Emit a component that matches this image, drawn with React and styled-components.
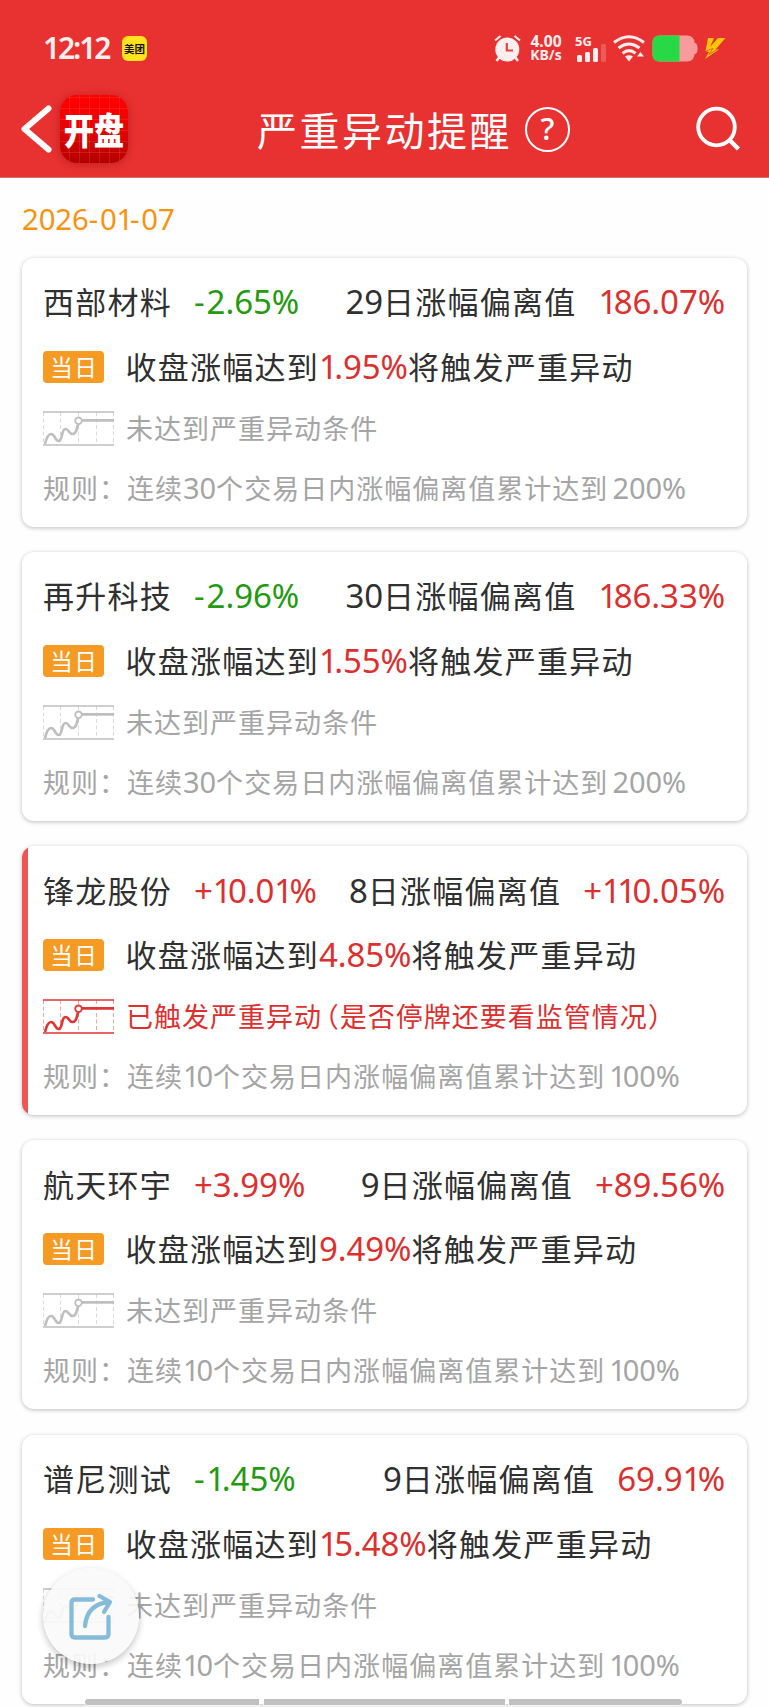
import React from "react";
import styled, { createGlobalStyle, css } from "styled-components";

const GlobalStyle = createGlobalStyle`
  * { box-sizing: border-box; }
  html, body { margin: 0; padding: 0; background: #fefefe; overflow: hidden; }
  body { font-family: "Noto Sans CJK SC", "Noto Sans", sans-serif; }
`;

const RED = "#dc302f";
const GREEN = "#239a10";
const INK = "#303030";
const GREY = "#a5a5a5";

const Screen = styled.div`
  position: relative;
  width: 769px;
  height: 1707px;
  overflow: hidden;
  background: #fefefe;
`;

const Header = styled.header`
  height: 178px;
  background: #e83131;
  border-bottom: 1px solid #d8706c;
`;

const StatusBar = styled.div`
  height: 94px;
  padding: 2px 43px 0 43px;
  display: flex;
  align-items: center;
  justify-content: space-between;
  color: #ffeeee;
`;

const StatusGroup = styled.div`
  display: flex;
  align-items: center;
`;

const Clock = styled.span`
  width: 79px;
  font: 600 30px/40px "Noto Sans", sans-serif;
  letter-spacing: -2.1px;
  white-space: nowrap;
`;

const AppChip = styled.span`
  width: 25px;
  height: 25px;
  border-radius: 6px;
  background: #ffe31f;
  color: #17140a;
  font: 700 10.5px/25px "Noto Sans CJK SC", sans-serif;
  text-align: center;
  white-space: nowrap;
`;

const Speed = styled.span`
  width: 34px;
  margin-left: 8px;
  margin-right: 1px;
  font: 700 15.6px/14px "Noto Sans", sans-serif;
  text-align: center;
  display: flex;
  flex-direction: column;
  align-items: center;
  gap: 0.5px;
  white-space: nowrap;
`;

const SpeedUnit = styled.span`
  font-size: 14px;
`;

const Signal = styled.span`
  width: 31px;
  height: 27px;
  margin-left: 11px;
  display: flex;
  flex-direction: column;
  font: 700 13px/12px "Noto Sans", sans-serif;
`;

const Bars = styled.span`
  height: 15px;
  margin: 0 0 0 2px;
  display: flex;
  align-items: flex-end;
  gap: 3.5px;
`;

const Bar = styled.i`
  width: 4.6px;
  height: ${(p) => p.$h}px;
  border-radius: 1.5px;
  background: #ffeeee;
  opacity: ${(p) => (p.$dim ? 0.22 : 1)};
`;

const TitleBar = styled.div`
  height: 70px;
  padding: 0 27px 0 20px;
  display: flex;
  align-items: center;
`;

const Logo = styled.div`
  width: 68px;
  height: 68px;
  margin-left: 6px;
  border-radius: 17px;
  background:
    repeating-linear-gradient(90deg, transparent 0 9px, rgba(255, 110, 90, 0.22) 9px 10px),
    repeating-linear-gradient(0deg, transparent 0 10px, rgba(255, 110, 90, 0.22) 10px 11px),
    linear-gradient(#ff0000 10%, #e40505 50%, #b30000);
  box-shadow: 0 1px 9px rgba(110, 0, 0, 0.35);
  display: flex;
  align-items: center;
  justify-content: center;
`;

const LogoText = styled.span`
  font: 900 37px/65px "Noto Sans CJK SC", sans-serif;
  letter-spacing: -0.5px;
  padding-right: 2px;
  color: #fff;
  white-space: nowrap;
  transform: scaleX(0.82);
`;

const Title = styled.h1`
  width: 268px;
  margin: 0 0 0 129px;
  font: 400 40px/60px "Noto Sans CJK SC", sans-serif;
  letter-spacing: 2.5px;
  color: #fff;
  white-space: nowrap;
`;

const HelpIcon = styled.span`
  width: 45px;
  height: 45px;
  border: 2.5px solid #fff;
  border-radius: 50%;
  color: #fff;
  font: 500 31px/39px "Noto Sans", sans-serif;
  text-align: center;
`;

const DateLine = styled.div`
  height: 79.6px;
  padding: 2px 22px 0;
  display: flex;
  align-items: center;
`;

const List = styled.main`
  padding: 0 22px;
  display: flex;
  flex-direction: column;
  gap: 25.3px;
`;

const Card = styled.article`
  height: 269px;
  flex: none;
  padding: 12px 22px 8px 21px;
  border-radius: 12px;
  background: #fff;
  overflow: hidden;
  box-shadow: 0 1px 4px rgba(0, 0, 0, 0.26);
  ${(p) =>
    p.$active &&
    css`
      background: linear-gradient(#ef5557, #ef5557) left top / 6px 100% no-repeat #fff;
    `}
`;

const Row = styled.div`
  height: ${(p) => p.$h}px;
  display: flex;
  align-items: center;
  white-space: nowrap;
`;

const MainText = styled.span`
  padding-bottom: 2px;
  font: 400 31px/46px "Noto Sans CJK SC", sans-serif;
  letter-spacing: 1.25px;
  color: ${INK};
`;

const SubText = styled.span`
  padding-bottom: 1px;
  font: 400 27px/40px "Noto Sans CJK SC", sans-serif;
  letter-spacing: 1.02px;
  color: ${(p) => p.$color || GREY};
`;

const Figure = styled.span`
  font-family: "Noto Sans", sans-serif;
  font-size: ${(p) => p.$size || 33}px;
  line-height: 40px;
  letter-spacing: -0.1px;
  color: ${(p) => p.$color};
`;

const One = styled.span`
  letter-spacing: -0.11em;
`;

const Dash = styled.span`
  letter-spacing: 0.06em;
`;

const Change = styled.span`
  margin-left: 22px;
  flex: 1;
`;

const Total = styled.span`
  margin-left: 22px;
`;

const Badge = styled.span`
  width: 61px;
  height: 32px;
  margin-right: 21.5px;
  border-radius: 4px;
  background: #f59a23;
  color: #fff;
  font: 400 22.5px/31px "Noto Sans CJK SC", sans-serif;
  letter-spacing: 1.5px;
  text-indent: 1.5px;
  text-align: center;
`;

const TrendSvg = styled.svg`
  width: 71px;
  height: 35px;
  margin-right: 12px;
  flex: none;
`;

const OpenParen = styled.span`
  margin-left: 3px;
  font-feature-settings: "halt" 1;
`;

const Limit = styled.span`
  margin-left: 4px;
`;

const ShareButton = styled.button`
  position: absolute;
  left: 43px;
  top: 1567.5px;
  width: 96px;
  height: 96px;
  padding: 0;
  border: 0;
  border-radius: 50%;
  background: rgba(250, 250, 250, 0.92);
  box-shadow: 0 3px 7px rgba(0, 0, 0, 0.24);
`;

const NavHandle = styled.div`
  position: absolute;
  left: 85px;
  top: 1698.5px;
  width: 597px;
  display: grid;
  grid-template-columns: 174px 241px 173px;
  gap: 4.5px;
`;

const NavPart = styled.i`
  height: 6px;
  background: #c0c0c0;
  box-shadow: 0 0 0 1px rgba(255, 255, 255, 0.6);
  border-radius: ${(p) => p.$r || "0"};
`;

function Num({ children, ...rest }) {
  return (
    <Figure {...rest}>
      {children.split("").map((c, i) => {
        if (c === "1") return <One key={i}>1</One>;
        if (c === "-") return <Dash key={i}>-</Dash>;
        return c;
      })}
    </Figure>
  );
}

function Trend({ active }) {
  const c = active ? "#df3533" : "#bfbfbf";
  const dash = active ? "#efa5a4" : "#dadada";
  return (
    <TrendSvg viewBox="0 0 71 35" fill="none">
      <path d="M.5 1V34M17.5 1V34M35.5 1V34M53.5 1V34M70.5 1V34" stroke={dash} strokeDasharray="4 2.5" />
      <path d="M0 1H71M0 34H71" stroke={c} strokeWidth="1.4" />
      <path
        d="M2 33C4 25 6 23 8 23C12 23 12 30 15.500 30C20 30 18 18 22.500 18C26 18 26 23.500 30 23C34 22.500 33.500 17 35.300 13"
        stroke={c}
        strokeWidth="2.7"
      />
      <circle cx="35.500" cy="9.800" r="3.300" stroke={c} strokeWidth="1.8" fill="#fff" />
      <path d="M39 9.400H71" stroke={c} strokeWidth="2.700" />
    </TrendSvg>
  );
}

function StockCard({ name, change, days, total, trigger, active, span, limit }) {
  return (
    <Card $active={active}>
      <Row $h={65}>
        <MainText>{name}</MainText>
        <Change>
          <Num $color={change[0] === "-" ? GREEN : RED}>{change}</Num>
        </Change>
        <MainText>
          <Num $color={INK}>{days}</Num>日涨幅偏离值
        </MainText>
        <Total>
          <Num $color={RED}>{total}</Num>
        </Total>
      </Row>
      <Row $h={64}>
        <Badge>当日</Badge>
        <MainText>
          收盘涨幅达到<Num $color={RED}>{trigger}</Num>将触发严重异动
        </MainText>
      </Row>
      <Row $h={59}>
        <Trend active={active} />
        {active ? (
          <SubText $color={RED}>
            已触发严重异动<OpenParen>（</OpenParen>是否停牌还要看监管情况）
          </SubText>
        ) : (
          <SubText>未达到严重异动条件</SubText>
        )}
      </Row>
      <Row $h={61}>
        <SubText>
          规则：连续<Num $size={29} $color={GREY}>{span}</Num>个交易日内涨幅偏离值累计达到
          <Limit>
            <Num $size={29} $color={GREY}>{limit}</Num>
          </Limit>
        </SubText>
      </Row>
    </Card>
  );
}

const stocks = [
  { name: "西部材料", change: "-2.65%", days: "29", total: "186.07%", trigger: "1.95%", span: "30", limit: "200%" },
  { name: "再升科技", change: "-2.96%", days: "30", total: "186.33%", trigger: "1.55%", span: "30", limit: "200%" },
  { name: "锋龙股份", change: "+10.01%", days: "8", total: "+110.05%", trigger: "4.85%", active: true, span: "10", limit: "100%" },
  { name: "航天环宇", change: "+3.99%", days: "9", total: "+89.56%", trigger: "9.49%", span: "10", limit: "100%" },
  { name: "谱尼测试", change: "-1.45%", days: "9", total: "69.91%", trigger: "15.48%", span: "10", limit: "100%" },
];

const AlarmIcon = () => (
  <svg width="27" height="27" viewBox="0 0 27 27" fill="none" stroke="#ffeeee">
    <circle cx="13.300" cy="14.500" r="12" fill="#ffeeee" stroke="none" />
    <path d="M1 5.500L6.500 1M20.500 1L26 5.500" strokeWidth="2.200" />
    <path d="M5.500 22L2.500 26M21 22L24 26" strokeWidth="2.600" />
    <path d="M12.800 8V15.500H19" stroke="#e04443" strokeWidth="2.200" />
  </svg>
);

const WifiStatus = styled.svg`
  margin-left: 7px;
`;

const BatteryStatus = styled.svg`
  margin-left: 7px;
`;

const BoltStatus = styled.svg`
  margin-left: 6px;
`;

const SearchSvg = styled.svg`
  margin-left: auto;
`;

export default function App() {
  return (
    <Screen>
      <GlobalStyle />
      <Header>
        <StatusBar>
          <StatusGroup>
            <Clock>12:12</Clock>
            <AppChip>美团</AppChip>
          </StatusGroup>
          <StatusGroup>
            <AlarmIcon />
            <Speed>
              4.00<SpeedUnit>KB/s</SpeedUnit>
            </Speed>
            <Signal>
              5G
              <Bars>
                <Bar $h={7} />
                <Bar $h={10} />
                <Bar $h={14} />
                <Bar $h={18} $dim />
              </Bars>
            </Signal>
            <WifiStatus width="32" height="27" viewBox="0 0 32 27" fill="none">
              <path d="M1 7.500Q16 -4 31 7.500M5.500 13Q16 5 26.500 13M9.500 18.300Q16 13 22.500 18.300" stroke="#ffeeee" strokeWidth="3" />
              <path d="M12 21.500Q16 19 20 21.500L16 26.500ZM24 21.500L27.500 17L31 21.500Z" fill="#ffeeee" />
            </WifiStatus>
            <BatteryStatus width="46" height="27" viewBox="0 0 46 27">
              <rect x="0.500" y="0.500" width="42" height="26" rx="7" fill="#f99b9c" />
              <path d="M42 8H43.500Q45.500 9 45.500 13.500T43.500 19H42Z" fill="#f99b9c" />
              <path d="M27.500 .5H7.500Q.5 .5 .5 7.500V19.500Q.5 26.500 7.500 26.500H27.500Z" fill="#28d946" />
            </BatteryStatus>
            <BoltStatus width="22" height="23" viewBox="0 0 22 23">
              <path d="M4 1H10L6 10L14 1H21.500L11.500 12.500H15L1 22L5 15L1.500 14Z" fill="#ffc50b" />
              <path d="M2 14L9 11.500L5 17.500L13 12.500" stroke="#e06a1f" fill="none" />
            </BoltStatus>
          </StatusGroup>
        </StatusBar>
        <TitleBar>
          <svg width="34" height="48" viewBox="0 0 34 48" fill="none">
            <path d="M28.500 3.500L4.500 24L28.500 44.500" stroke="#fff" strokeWidth="6" strokeLinecap="round" strokeLinejoin="round" />
          </svg>
          <Logo>
            <LogoText>开盘</LogoText>
          </Logo>
          <Title>严重异动提醒</Title>
          <HelpIcon>?</HelpIcon>
          <SearchSvg width="46" height="46" viewBox="0 0 46 46" fill="none" stroke="#fff">
            <circle cx="20.500" cy="21" r="18.300" strokeWidth="3.800" />
            <path d="M33.500 34L42.500 43" strokeWidth="4.500" />
          </SearchSvg>
        </TitleBar>
      </Header>
      <DateLine>
        <Num $size={29.3} $color="#f7930f">2026-01-07</Num>
      </DateLine>
      <List>
        {stocks.map((s) => (
          <StockCard key={s.name} {...s} />
        ))}
      </List>
      <ShareButton aria-label="share">
        <svg width="96" height="96" viewBox="0 0 96 96" fill="none" stroke="#86bcd9" strokeWidth="4.300" strokeLinecap="round" strokeLinejoin="round">
          <path d="M50 31.500H32Q28.500 31.500 28.500 35V66Q28.500 69.500 32 69.500H62Q65.500 69.500 65.500 66V49" />
          <path d="M42 58Q44 36 66 34M56.500 28L67 34L61 44" />
        </svg>
      </ShareButton>
      <NavHandle>
        <NavPart $r="3px 0 0 3px" />
        <NavPart />
        <NavPart $r="0 3px 3px 0" />
      </NavHandle>
    </Screen>
  );
}
